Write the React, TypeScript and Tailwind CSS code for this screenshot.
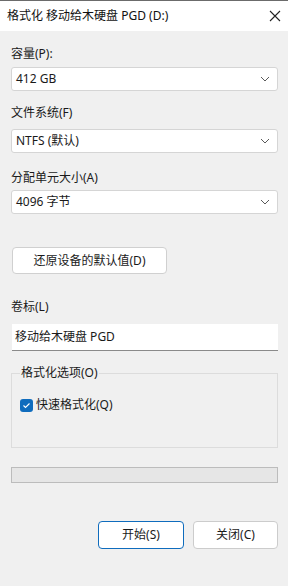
import React from 'react';

const font = { fontFamily: '"Noto Sans", "Noto Sans CJK SC", sans-serif' };

const Chevron = () => (
  <svg width="10" height="6" viewBox="0 0 10 6" className="shrink-0">
    <path d="M1 1 L5 5 L9 1" fill="none" stroke="#5a5a5a" strokeWidth="1" />
  </svg>
);

const Combo: React.FC<{ value: string; className?: string }> = ({ value, className }) => (
  <div className={`h-[24px] flex items-center justify-between bg-white border border-[#d5d5d5] rounded-[3px] pl-[4px] pr-[7px] ${className ?? ''}`}>
    <span className="text-[12px] leading-[16px] text-[#1a1a1a]">{value}</span>
    <Chevron />
  </div>
);

const Label: React.FC<{ text: string; className?: string }> = ({ text, className }) => (
  <div className={`text-[12px] leading-[16px] text-[#1a1a1a] ${className ?? ''}`}>{text}</div>
);

export default function App() {
  return (
    <div className="w-[288px] h-[586px] flex flex-col bg-[#f0f0f0] overflow-hidden" style={font}>
      <div className="h-[31px] bg-white border-t border-[#6b6b6b] flex items-center justify-between pl-[7px] pr-[6px]">
        <span className="text-[12px] leading-[16px] text-[#111]">格式化 移动给木硬盘 PGD (D:)</span>
        <svg width="12" height="12" viewBox="0 0 12 12" className="mr-[1px]">
          <path d="M1 1 L11 11 M11 1 L1 11" stroke="#222" strokeWidth="1.1" />
        </svg>
      </div>

      <div className="flex flex-col px-[11px] pr-[10px]">
        <Label text="容量(P):" className="mt-[15px]" />
        <Combo value="412 GB" className="mt-[5px]" />

        <Label text="文件系统(F)" className="mt-[14px]" />
        <Combo value="NTFS (默认)" className="mt-[8px]" />

        <Label text="分配单元大小(A)" className="mt-[17px]" />
        <Combo value="4096 字节" className="mt-[4px]" />

        <div className="mt-[33px] ml-[1px] w-[155px] h-[27px] flex items-center justify-center bg-white border border-[#d0d0d0] rounded-[4px] text-[12px] leading-[16px] text-[#1a1a1a]">
          还原设备的默认值(D)
        </div>

        <Label text="卷标(L)" className="mt-[25px]" />
        <div className="mt-[9px] ml-[1px] h-[27px] flex items-center bg-white border-b border-[#8a8a8a] pl-[3px] text-[12px] leading-[16px] text-[#1a1a1a]">
          移动给木硬盘 PGD
        </div>

        <div className="relative mt-[22px] h-[75px] border border-[#dcdcdc]">
          <span className="absolute left-[8px] top-[-9px] bg-[#f0f0f0] px-[1px] text-[12px] leading-[16px] text-[#1a1a1a]">
            格式化选项(O)
          </span>
          <div className="flex items-center mt-[23px] ml-[8px]">
            <div className="w-[13px] h-[13px] rounded-[3px] bg-[#0f6cbd] flex items-center justify-center">
              <svg width="9" height="7" viewBox="0 0 9 7">
                <path d="M1.5 3.5 L3.5 5.5 L7.5 1.5" fill="none" stroke="white" strokeWidth="1.1" />
              </svg>
            </div>
            <span className="ml-[3px] text-[12px] leading-[16px] text-[#1a1a1a]">快速格式化(Q)</span>
          </div>
        </div>

        <div className="mt-[19px] h-[16px] bg-[#e6e6e6] border border-[#bcbcbc]" />

        <div className="mt-[38px] flex justify-end gap-[9px]">
          <div className="w-[86px] h-[28px] flex items-center justify-center bg-white border border-[#0f6cbd] rounded-[4px] text-[12px] leading-[16px] text-[#1a1a1a]">
            开始(S)
          </div>
          <div className="w-[85px] h-[28px] flex items-center justify-center bg-white border border-[#cccccc] rounded-[4px] text-[12px] leading-[16px] text-[#1a1a1a]">
            关闭(C)
          </div>
        </div>
      </div>
    </div>
  );
}
